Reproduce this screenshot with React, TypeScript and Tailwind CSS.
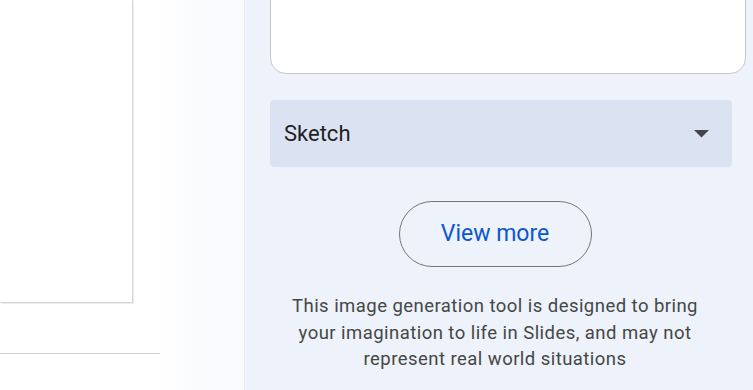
export default function App() {
  return (
    <div
      className="flex h-[390px] w-[753px] overflow-hidden bg-white"
      style={{ fontFamily: "Roboto, 'Open Sans', sans-serif" }}
    >
      {/* canvas side */}
      <div className="flex w-[244px] shrink-0 bg-gradient-to-r from-white from-[64%] to-[#f8fafd] to-[88%]">
        <div className="flex w-[160px] flex-col">
          <div className="h-[303px] w-[133px] border-b border-r border-[#d6d6d6] bg-white shadow-[1px_1px_0_#ececec]" />
          <div className="mt-[50px] h-px w-[160px] bg-[#d2d2d2]" />
        </div>
      </div>

      {/* side panel */}
      <div className="flex flex-1 flex-col border-l border-[#e6eaf3] bg-[#eef2fa] pl-[25px] pr-[7px]">
        <div className="-mt-[20px] h-[94px] w-[476px] rounded-[16px] border border-[#c4c7cc] bg-white" />

        <div className="mt-[26px] flex h-[67px] w-[462px] items-center justify-between rounded-[4px] bg-[#dbe3f2] pl-[14px] pr-[23px]">
          <span className="text-[22px] text-[#1f1f1f]">Sketch</span>
          <svg width="15" height="8" viewBox="0 0 15 8" className="fill-[#444746]">
            <path d="M0 0h15L7.5 7.5z" />
          </svg>
        </div>

        <div className="mt-[34px] flex w-[450px] justify-center">
          <button className="flex h-[66px] w-[193px] items-center justify-center rounded-full border border-[#747775] text-[23px] text-[#0b57d0]">
            View more
          </button>
        </div>

        <p className="mt-[26px] w-[450px] text-center text-[18.5px] tracking-[0.45px] leading-[26.5px] text-[#444746]">
          This image generation tool is designed to bring
          <br />
          your imagination to life in Slides, and may not
          <br />
          represent real world situations
        </p>
      </div>
    </div>
  );
}
